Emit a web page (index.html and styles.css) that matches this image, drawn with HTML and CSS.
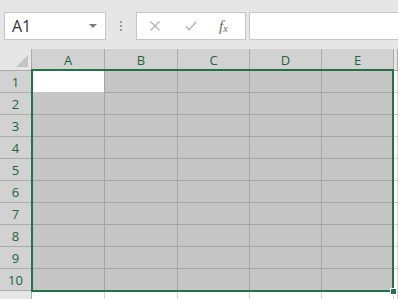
FILE: index.html
```html
<!DOCTYPE html>
<html lang="en">
<head>
  <meta charset="UTF-8">
  <title>Sheet</title>
  <link rel="stylesheet" href="styles.css">
</head>
<body>
  <div class="formula-bar">
    <div class="name-box">
      <span class="name-value">A1</span>
      <span class="name-arrow"></span>
    </div>
    <div class="grip">
      <span></span><span></span><span></span>
    </div>
    <div class="fx-buttons">
      <svg class="fx-icon" viewBox="0 0 12 12" width="12" height="12">
        <path d="M1.5 1.5l9 9M10.5 1.5l-9 9" stroke="#b3b3b3" stroke-width="1.3" fill="none" />
      </svg>
      <svg class="fx-icon" viewBox="0 0 12 12" width="12" height="12">
        <path d="M1 6.5l3.2 3.3L11 2" stroke="#b3b3b3" stroke-width="1.3" fill="none" />
      </svg>
      <span class="fx-label">f<sub>x</sub></span>
    </div>
    <div class="formula-input"></div>
  </div>

  <div class="sheet">
    <div class="grid">
      <div class="corner"><span class="corner-tri"></span></div>
      <div class="col-head sel">A</div>
      <div class="col-head sel">B</div>
      <div class="col-head sel">C</div>
      <div class="col-head sel">D</div>
      <div class="col-head sel">E</div>
      <div class="col-head"></div>

      <div class="row-head sel">1</div>
      <div class="cell active"></div><div class="cell sel"></div><div class="cell sel"></div><div class="cell sel"></div><div class="cell sel"></div><div class="cell"></div>
      <div class="row-head sel">2</div>
      <div class="cell sel"></div><div class="cell sel"></div><div class="cell sel"></div><div class="cell sel"></div><div class="cell sel"></div><div class="cell"></div>
      <div class="row-head sel">3</div>
      <div class="cell sel"></div><div class="cell sel"></div><div class="cell sel"></div><div class="cell sel"></div><div class="cell sel"></div><div class="cell"></div>
      <div class="row-head sel">4</div>
      <div class="cell sel"></div><div class="cell sel"></div><div class="cell sel"></div><div class="cell sel"></div><div class="cell sel"></div><div class="cell"></div>
      <div class="row-head sel">5</div>
      <div class="cell sel"></div><div class="cell sel"></div><div class="cell sel"></div><div class="cell sel"></div><div class="cell sel"></div><div class="cell"></div>
      <div class="row-head sel">6</div>
      <div class="cell sel"></div><div class="cell sel"></div><div class="cell sel"></div><div class="cell sel"></div><div class="cell sel"></div><div class="cell"></div>
      <div class="row-head sel">7</div>
      <div class="cell sel"></div><div class="cell sel"></div><div class="cell sel"></div><div class="cell sel"></div><div class="cell sel"></div><div class="cell"></div>
      <div class="row-head sel">8</div>
      <div class="cell sel"></div><div class="cell sel"></div><div class="cell sel"></div><div class="cell sel"></div><div class="cell sel"></div><div class="cell"></div>
      <div class="row-head sel">9</div>
      <div class="cell sel"></div><div class="cell sel"></div><div class="cell sel"></div><div class="cell sel"></div><div class="cell sel"></div><div class="cell"></div>
      <div class="row-head sel">10</div>
      <div class="cell sel"></div><div class="cell sel"></div><div class="cell sel"></div><div class="cell sel"></div><div class="cell sel"></div><div class="cell"></div>
      <div class="row-head"></div>
      <div class="cell"></div><div class="cell"></div><div class="cell"></div><div class="cell"></div><div class="cell"></div><div class="cell"></div>
    </div>

    <div class="selection">
      <span class="fill-handle"></span>
    </div>
  </div>
</body>
</html>
```

FILE: styles.css
```css
* {
  margin: 0;
  padding: 0;
  box-sizing: border-box;
}

html, body {
  height: 100%;
  overflow: hidden;
}

body {
  font-family: 'Open Sans', 'Noto Sans', sans-serif;
  background: #ffffff;
  color: #333333;
}

/* formula bar */

.formula-bar {
  height: 49px;
  background: #e6e6e6;
  display: flex;
  align-items: flex-start;
  padding: 12px 0 0 4px;
}

.name-box {
  width: 102px;
  height: 28px;
  background: #ffffff;
  border: 1px solid #c6c6c6;
  display: flex;
  align-items: center;
  justify-content: space-between;
  padding: 0 8px 0 7px;
}

.name-value {
  font-size: 16px;
  color: #333333;
}

.name-arrow {
  width: 0;
  height: 0;
  border-left: 4px solid transparent;
  border-right: 4px solid transparent;
  border-top: 4px solid #7a7a7a;
}

.grip {
  width: 30px;
  height: 28px;
  display: flex;
  flex-direction: column;
  align-items: center;
  justify-content: center;
  gap: 2px;
}

.grip span {
  width: 2px;
  height: 2px;
  background: #9c9c9c;
}

.fx-buttons {
  width: 110px;
  height: 28px;
  background: #ffffff;
  border: 1px solid #c6c6c6;
  display: flex;
  align-items: center;
  padding-left: 12px;
  gap: 24px;
}

.fx-label {
  font-family: 'Liberation Serif', serif;
  font-style: italic;
  font-size: 15px;
  color: #666666;
  margin-left: -2px;
}

.fx-label sub {
  font-size: 10px;
  vertical-align: -1px;
}

.formula-input {
  flex: 1;
  height: 28px;
  margin-left: 3px;
  background: #ffffff;
  border: 1px solid #c6c6c6;
  border-right: none;
}

/* sheet */

.sheet {
  position: relative;
}

.grid {
  display: grid;
  grid-template-columns: 32px 73px 73px 72px 72px 72px 1fr;
  grid-auto-rows: 22px;
}

.corner,
.col-head,
.row-head {
  background: #e6e6e6;
  border-right: 1px solid #ababab;
  border-bottom: 1px solid #ababab;
  font-size: 13px;
  color: #444444;
  display: flex;
  align-items: center;
  justify-content: center;
}

.col-head.sel,
.row-head.sel {
  background: #d2d2d2;
  color: #22633f;
}

.corner {
  position: relative;
  background: #e6e6e6;
}

.corner-tri {
  position: absolute;
  right: 3px;
  bottom: 3px;
  width: 0;
  height: 0;
  border-left: 12px solid transparent;
  border-bottom: 12px solid #c4c4c4;
}

.cell {
  background: #ffffff;
  border-right: 1px solid #d4d4d4;
  border-bottom: 1px solid #d4d4d4;
}

.cell.sel {
  background: #c6c6c6;
  border-right-color: #a5a5a5;
  border-bottom-color: #a5a5a5;
}

.cell.active {
  background: #ffffff;
  border-right-color: #a5a5a5;
  border-bottom-color: #c6c6c6;
}

/* selection frame drawn over the cells */

.selection {
  position: absolute;
  left: 31px;
  top: 20px;
  width: 363px;
  height: 223px;
  border: 2px solid #217346;
  pointer-events: none;
}

.fill-handle {
  position: absolute;
  right: -5px;
  bottom: -5px;
  width: 7px;
  height: 7px;
  background: #217346;
  border: 1px solid #ffffff;
}
```
